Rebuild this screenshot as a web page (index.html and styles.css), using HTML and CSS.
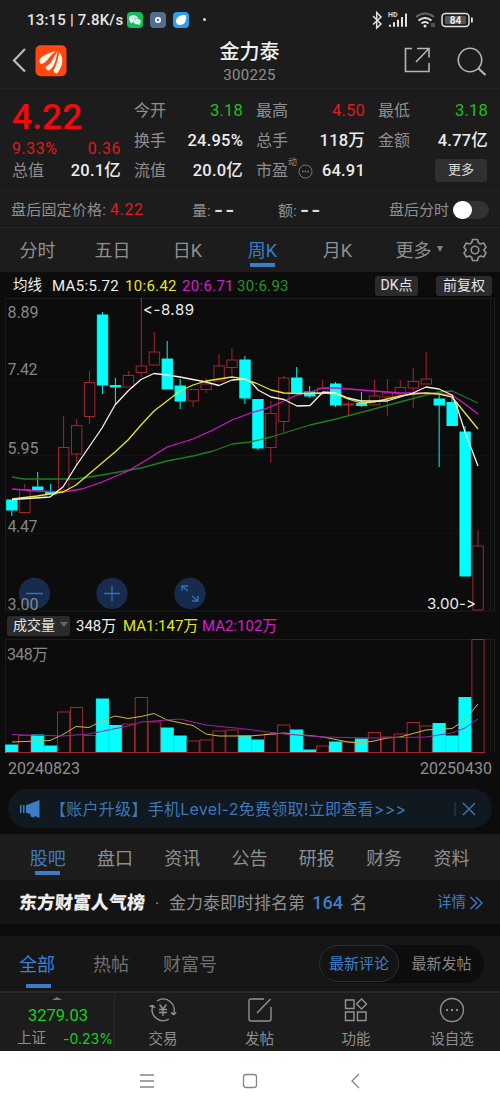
FILE: index.html
```html
<!DOCTYPE html>
<html lang="zh-CN">
<head>
<meta charset="utf-8">
<title>金力泰 300225</title>
<link rel="stylesheet" href="styles.css">
</head>
<body>
<div class="status">
  <span class="clock">13:15 | 7.8K/s</span>
  <svg class="apps" width="64" height="16" viewBox="0 0 64 16">
    <rect width="16" height="16" rx="4" fill="#14bd5c"/>
    <ellipse cx="6.3" cy="6.8" rx="4.4" ry="3.6" fill="#e8f8ee"/><ellipse cx="10.3" cy="9.6" rx="3.7" ry="3" fill="#fff" stroke="#14bd5c" stroke-width=".5"/>
    <path d="M4 9l-.8 2.4L6 10zM11 12l2 1.2-.3-2z" fill="#fff"/>
    <circle cx="5" cy="6" r=".6" fill="#14bd5c"/><circle cx="8" cy="6" r=".6" fill="#14bd5c"/><circle cx="9" cy="9" r=".5" fill="#14bd5c"/><circle cx="11.6" cy="9" r=".5" fill="#14bd5c"/>
    <rect x="23" width="16" height="16" rx="4" fill="#526e8d"/><circle cx="31" cy="8" r="2.2" fill="none" stroke="#fff" stroke-width="1.7"/>
    <rect x="46" width="16" height="16" rx="4" fill="#2ba0e6"/><path d="M49 9.500C49 5 53 2.500 59 3c1 6-1.500 10-6 10q-3.500 0-4-3.500z" fill="#fff"/>
  </svg>
  <span class="dot"></span>
  <svg class="signals" width="104" height="22" viewBox="0 0 104 22">
    <g fill="none" stroke="#e2e2e2" stroke-width="1.500">
      <path d="M1 7l8 8-4.300 4V3.500L9 8l-8 7.500"/>
      <path d="M18 17.800v-2M22 17.800v-4.500M26 17.800v-7M30 17.800V8M34 17.800V4.500" stroke-width="2"/>
      <path d="M44 8q9-7 18 0" stroke="#666" stroke-width="2"/><path d="M46.500 11.500q6.500-5 13 0M49.500 14.500q3.500-3 7 0" stroke-width="2"/>
      <rect x="70" y="4.500" width="27" height="13" rx="3.500"/>
    </g>
    <circle cx="53" cy="17" r="1.500" fill="#e2e2e2"/><path d="M60 14v4M62 14v4" stroke="#888"/>
    <rect x="73" y="7" width="21" height="8" rx="1" fill="#555"/><rect x="99" y="8.500" width="1.800" height="5" fill="#e2e2e2"/>
    <text x="83.500" y="15" class="battery">84</text><text x="16" y="8" class="hd">HD</text>
  </svg>
</div>

<header class="header">
  <svg width="56" height="34" viewBox="0 0 56 34">
    <path d="M14 6L3 17.500l11 11" fill="none" stroke="#b9b9b9" stroke-width="2.200"/>
    <rect x="24.500" y="2.300" width="31" height="31" rx="5" fill="#ff4810"/>
    <g fill="#fff6e8" transform="translate(1 0)">
      <path d="M27.500 18c0-4 7-7.500 16.500-10-7 5-9 12-14.500 13q-2-.5-2-3z"/>
      <path d="M33.500 24c6-3 7-9 12.500-16-2.500 8-2.500 15.500-9 19.500-1.500 0-3-1-3.500-3.500z"/>
      <path d="M41.500 27.500c3-5 4-11 6-18.500 4.500 7 3.500 14-2.500 21.500q-3-.5-3.500-3z"/>
    </g>
  </svg>
  <div class="name"><h1>金力泰</h1><p>300225</p></div>
  <svg class="tools" width="84" height="34" viewBox="0 0 84 34">
    <g fill="none" stroke="#b5b5b5" stroke-width="1.600">
      <path d="M8 5.500H1.500v23h23.500V20M13 5.500h12v9M25 5.500L12 19"/>
      <circle cx="66" cy="17" r="11.700"/><path d="M74.500 25.500l7 6.500" stroke-width="2.200"/>
    </g>
  </svg>
</header>

<section class="quote">
  <div class="col main">
    <strong class="price">4.22</strong>
    <div class="cell red change"><span>9.33%</span><span>0.36</span></div>
    <div class="cell"><span>总值</span><b>20.1亿</b></div>
  </div>
  <div class="col">
    <div class="cell"><span>今开</span><b class="green">3.18</b></div>
    <div class="cell"><span>换手</span><b>24.95%</b></div>
    <div class="cell"><span>流值</span><b>20.0亿</b></div>
  </div>
  <div class="col">
    <div class="cell"><span>最高</span><b class="red">4.50</b></div>
    <div class="cell"><span>总手</span><b>118万</b></div>
    <div class="cell"><span class="pe">市盈<sup>动</sup><svg width="15" height="15" viewBox="0 0 15 15"><circle cx="7.500" cy="7.500" r="6.500" fill="none" stroke="#777"/><path d="M4 7.500h7" stroke="#888" stroke-width="1.300" stroke-dasharray="1.500 1.200"/></svg></span><b>64.91</b></div>
  </div>
  <div class="col">
    <div class="cell"><span>最低</span><b class="green">3.18</b></div>
    <div class="cell"><span>金额</span><b>4.77亿</b></div>
    <div class="cell end"><span class="more">更多</span></div>
  </div>
</section>

<section class="after">
  <span class="fixed">盘后固定价格: <i class="red">4.22</i></span>
  <span class="qty">量: <b>--</b></span>
  <span class="amt">额: <b>--</b></span>
  <span class="session">盘后分时</span><span class="switch"></span>
</section>

<nav class="periods">
  <span>分时</span><span>五日</span><span>日K</span><span class="on">周K</span><span>月K</span><span class="wide">更多<i></i></span>
  <svg width="24" height="24" viewBox="0 0 24 24" fill="none" stroke="#929292" stroke-width="1.600" stroke-linejoin="round"><path d="M9.500 1.500h5l.8 3.200 2.300 1.300 3.100-1 2.300 4.200-2.200 2.800 2.200 2.800-2.300 4.200-3.100-1-2.300 1.300-.8 3.200h-5l-.8-3.200L6.400 18l-3.100 1L1 14.800 3.200 12 1 9.200 3.300 5l3.100 1 2.300-1.300z"/><circle cx="12" cy="12" r="3.800"/></svg>
</nav>

<section class="chart">
  <div class="legend"><span class="ma0">均线</span><span class="ma5">MA5:5.72</span><span class="ma10">10:6.42</span><span class="ma20">20:6.71</span><span class="ma30">30:6.93</span><span class="chip dk">DK点</span><span class="chip fq">前复权</span></div>
  <svg id="candles" class="plot" width="500" height="313" viewBox="0 298 500 313"></svg>
  <div class="legend volume"><span class="chip pick">成交量<i></i></span><span class="v0">348万</span><span class="v1">MA1:147万</span><span class="v2">MA2:102万</span></div>
  <svg id="volume" class="plot" width="500" height="115" viewBox="0 639 500 115"></svg>
  <div class="dates"><span>20240823</span><span>20250430</span></div>
</section>

<section class="banner">
  <svg width="22" height="18" viewBox="0 0 22 18" fill="#3d7cc6"><path d="M0 5h1.500v8H0zM3 5h1.500v8H3zM6 5.200L19.500 0v18L15 16l-1 1.500-3.500-1V14L6 12.800z"/></svg>
  <span>【账户升级】手机Level-2免费领取!立即查看&gt;&gt;&gt;</span>
  <svg class="close" width="28" height="18" viewBox="0 0 28 18" fill="none" stroke="#3d71ad"><path d="M1 2v14" stroke="#28445f"/><path d="M9 3l12 12M21 3L9 15" stroke-width="1.500"/></svg>
</section>

<nav class="sections"><span class="on">股吧</span><span>盘口</span><span>资讯</span><span>公告</span><span>研报</span><span>财务</span><span>资料</span></nav>

<section class="rank">
  <strong>东方财富人气榜</strong><em>·</em><span>金力泰即时排名第 <b>164</b> 名</span>
  <a>详情<svg width="13" height="14" viewBox="0 0 13 14" fill="none" stroke="#3f7dca" stroke-width="1.400"><path d="M.5 1l6 6-6 6M6 1l6 6-6 6"/></svg></a>
</section>

<section class="feed">
  <span class="on">全部</span><span class="hot">热帖</span><span class="cfh">财富号</span>
  <div class="sort"><span class="active">最新评论</span><span>最新发帖</span></div>
</section>

<footer class="bottom">
  <div class="index"><i></i><strong>3279.03</strong><p><span>上证</span><b>-0.23%</b></p></div>
  <div class="action"><svg viewBox="0 0 28 26"><path d="M8 4A11 11 0 0 1 24.500 17M20 22A11 11 0 0 1 3.800 9M.5 9.500L3.800 8.500 6 11M22 15.500l2.500 2 2.800-2M10.500 7.500l3.500 4.500 3.500-4.500M10 12.500h8M10 15.500h8M14 12v7"/></svg>交易</div>
  <div class="action"><svg viewBox="0 0 28 26"><path d="M18 2H5q-2 0-2 2v18q0 2 2 2h18q2 0 2-2V10M24.500 2L11 16"/></svg>发帖</div>
  <div class="action"><svg viewBox="0 0 28 26"><path d="M3.500 3h8.500v8.500H3.500zM3.500 15H12v8.500H3.500zM15.500 15H24v8.500h-8.500zM19.500 2l5 5-5 5-5-5z"/></svg>功能</div>
  <div class="action"><svg viewBox="0 0 28 26"><circle cx="14" cy="13" r="11.500"/><path d="M8 13h2M13 13h2M18 13h2" stroke-width="2"/></svg>设自选</div>
</footer>

<div class="system">
  <svg width="226" height="20" viewBox="0 0 226 20" fill="none" stroke="#858585" stroke-width="1.300"><path d="M3 4h14M3 10h14M3 16h14"/><rect x="106.500" y="3.500" width="13" height="13" rx="2.500"/><path d="M222 3l-7 7 7 7"/></svg>
</div>
<script src="chart.js"></script>
</body>
</html>
```

FILE: styles.css
```css
* { box-sizing: border-box; }
body { margin: 0; width: 500px; height: 1111px; overflow: hidden; background: #0c0c0c; color: #8f8f8f; font: 16px/20px Roboto, "Noto Sans CJK SC", sans-serif; font-variant-ligatures: none; }
h1, p { margin: 0; font-weight: 400; }
i { font-style: normal; }
svg { display: block; flex: none; }
span, b, strong { white-space: nowrap; }
.red { color: #dd1c1f; }
.green { color: #22bd22; }

.status { height: 38px; display: flex; align-items: center; padding: 1px 0 0 27px; background: #1c1c1c; }
.clock { width: 100px; color: #e6e6e6; font-size: 15px; font-weight: 500; letter-spacing: .2px; }
.dot { width: 3px; height: 3px; margin-left: 12px; border-radius: 50%; background: #ddd; }
.signals { margin-left: 166px; }
.battery { font: bold 10px Roboto, sans-serif; fill: #eee; text-anchor: middle; }
.hd { font: bold 7px Roboto, sans-serif; fill: #ddd; }

.header { height: 51px; display: flex; justify-content: space-between; padding: 5px 12px 0 11px; background: #1c1c1c; border-bottom: 1px solid #232323; }
.name { width: 120px; margin-left: 28px; text-align: center; }
.name h1 { color: #f1f1f1; font-size: 20px; line-height: 18px; font-weight: 500; }
.name p { margin-top: 4px; font-size: 15px; line-height: 20px; letter-spacing: .35px; }

.quote { height: 101px; display: grid; grid-template-columns: 109px 109px 109px 110px; column-gap: 13px; padding: 7px 13px 0 12px; background: #1c1c1c; }
.col { display: grid; grid-template-rows: 30px 30px 30px; }
.col.main { grid-template-rows: 46px 14px 30px; }
.price { color: #f4090c; font-size: 35.500px; line-height: 43px; font-weight: 500; }
.cell { display: flex; justify-content: space-between; align-items: center; }
.cell b { font-size: 16.500px; font-weight: 500; letter-spacing: .2px; }
.cell b:not(.red):not(.green) { color: #ececec; }
.cell b.red, .cell b.green { font-weight: 400; font-size: 16.500px; }
.change { height: 14px; letter-spacing: .5px; }
.cell.end { justify-content: flex-end; }
.more { width: 52px; height: 23px; margin: -2px 1px 0 0; background: #303030; color: #ddd; border-radius: 3px; font-size: 13px; line-height: 22px; text-align: center; }
.pe { display: flex; align-items: center; }
.pe sup { align-self: flex-start; font-size: 9px; line-height: 9px; margin-top: -3px; }
.pe svg { margin-left: 1px; }

.after { height: 37px; display: grid; grid-template-columns: 181px 86px 111px 64px 38px; align-items: center; padding: 2px 0 0 11px; font-size: 15px; background: #1c1c1c; border-top: 1px solid #242424; }
.after b { color: #ddd; display: inline-block; font-family: Inter, sans-serif; font-size: 18px; letter-spacing: 2px; transform: scaleX(1.08); transform-origin: left; }
.fixed { font-size: 15px; letter-spacing: .2px; }
.fixed .red { font-size: 16px; letter-spacing: .6px; }
.switch { width: 36px; height: 18px; border-radius: 9px; background: #323232; }
.switch::before { content: ""; display: block; width: 19px; height: 18px; border-radius: 9px; background: #fff; }

.periods { height: 45px; display: grid; grid-template-columns: 75px 75px 75px 75px 75px 88px 24px; align-items: center; background: #1c1c1c; border-top: 1px solid #252525; font-size: 18px; text-align: center; }
.periods > span { line-height: 46px; height: 44px; }
.periods .on, .sections .on, .feed .on { color: #3c7bc8; background: linear-gradient(#3c7bc8, #3c7bc8) center bottom / 25px 4px no-repeat; }
.periods .on { background-position: center 35px; }
.periods .wide i { display: inline-block; margin: 0 0 5px 5px; border: 3px solid transparent; border-top: 6px solid #858585; border-bottom: 0; }

.chart { background: #0c0c0c; }
.legend { height: 26px; display: grid; grid-template-columns: 39px 73px 57px 55px 138px 61px 56px; padding: 2px 0 0 13px; align-items: center; font-size: 15px; }
.ma0, .ma5, .v0 { color: #eee; }
.ma0 { font-size: 14.500px; }
.ma5 { letter-spacing: .35px; }
.ma10, .ma20, .ma30 { letter-spacing: .3px; }
.ma10, .v1 { color: #e5e526; }
.ma20, .v2 { color: #d41fcd; }
.ma30 { color: #24942a; }
.chip { height: 20px; border-radius: 3px; background: #2b2b2b; color: #e5e5e5; font-size: 14px; line-height: 19px; text-align: center; }
.chip.dk { width: 43px; }
.chip.fq { width: 56px; }
.legend.volume { height: 28px; grid-template-columns: 69px 47px 79px 90px; padding: 2px 0 0 7px; }
.chip.pick { width: 63px; text-align: left; padding-left: 6px; }
.chip.pick i { display: inline-block; margin: 0 0 3px 5px; border: 4px solid transparent; border-top: 5px solid #666; border-bottom: 0; }
.plot { font-size: 16px; overflow: visible; }
.grid { stroke: #1d1d1d; fill: none; }
.faint { stroke: #131313; fill: none; }
.up { stroke: #a3262d; fill: none; }
.down { stroke: #00f7f7; fill: #00ffff; }
.line { fill: none; stroke-width: 1.300; stroke-linejoin: round; }
#volume .line { stroke-width: 1; }
.axis { fill: #858585; }
.mark { fill: #eee; font-family: Inter, sans-serif; font-size: 15px; font-feature-settings: "calt" 0; }
.symbol { fill: none; stroke: #3470b5; stroke-width: 1.300; }
.knob { fill: #172b4c; }
.dates { height: 35px; display: flex; justify-content: space-between; padding: 5px 8px 0; }

.banner { height: 39px; margin: 0 8px; padding: 0 12px; border-radius: 20px; background: #101820; color: #3f77b7; display: flex; align-items: center; font: 16px/20px Inter, "Noto Sans CJK SC", sans-serif; font-feature-settings: "calt" 0; }
.banner span { margin-left: 8px; letter-spacing: .28px; }
.banner .close { margin-left: auto; margin-right: -2px; }

.sections { margin-top: 6px; height: 46px; display: grid; grid-template-columns: repeat(7, 67.300px); padding-left: 14px; background: #1c1c1c; font-size: 18px; line-height: 49px; text-align: center; }
.sections span { height: 46px; }
.sections .on { background-position: center 37px; }
.rank { height: 44px; display: flex; align-items: center; padding: 1px 17px 0 19px; background: #141414; font-size: 17px; }
.rank strong { width: 127px; font-size: 18px; font-weight: 900; color: #eee; transform: skewX(-4deg); }
.rank em { width: 22px; text-align: center; margin-right: 1px; }
.rank b { color: #3f7dca; margin: 0 3px; font-size: 18px; font-weight: 500; }
.rank a { display: flex; align-items: center; gap: 4px; margin-left: auto; color: #3f7dca; font-size: 14.500px; }

.feed { margin-top: 12px; height: 55px; display: flex; padding-left: 19px; background: #161616; font-size: 18px; line-height: 58px; color: #6f6f6f; }
.feed > span { height: 55px; }
.feed .on { width: 38px; background-position: center 48px; color: #3b80dd; }
.hot { margin-left: 36px; width: 70px; }
.sort { height: 38px; margin: 9px 0 0 102px; border-radius: 19px; background: #0d0d0d; display: flex; font-size: 15px; line-height: 39px; color: #858585; }
.sort span { width: 85px; height: 37px; text-align: center; }
.sort .active { width: 80px; color: #3f7fca; border: 1px solid #303030; border-radius: 19px; background: #131313; line-height: 37px; }

.bottom { height: 60px; display: grid; grid-template-columns: 115px 96px 97px 96px 96px; border-top: 2px solid #292929; background: #1c1c1c; }
.index { border-right: 1px solid #282828; text-align: center; }
.index i { display: block; width: 10px; height: 3px; margin: 4px auto 0; background: #777; clip-path: polygon(50% 0, 100% 100%, 0 100%); }
.index strong { display: block; padding-left: 2px; color: #19cd25; font-size: 16.500px; line-height: 31px; font-weight: 400; }
.index p { display: flex; justify-content: space-between; padding: 0 1px 0 17px; font-size: 14.500px; line-height: 15px; }
.index b { color: #19cd25; font-family: Inter, sans-serif; font-size: 14px; font-weight: 400; }
.action { display: flex; flex-direction: column; align-items: center; gap: 7px; padding-top: 4px; font-size: 14.500px; line-height: 19px; }
.action svg { width: 28px; height: 26px; fill: none; stroke: #929292; stroke-width: 1.400; }
.system { height: 60px; padding: 20px 0 0 137px; background: #fff; }
```

FILE: chart.js
```js
// Screen-space series: [rising, body top, body bottom, wick top, wick bottom]
const candles = [
  [0,500,510,500,516],[1,489.5,512.5,484,512.5],[0,487,490,472,490],[0,492,494,484,494],
  [1,447.5,490,416,490],[1,425.7,454,419,466],[1,382.5,416.5,371,424],[0,315,385,312,394],
  [0,385.5,387,378,404],[1,375.5,387,371,387],[1,366,372.5,298,377],[1,352,365,332,365],
  [0,359,389,341,389],[0,386,401,379,409],[1,389.5,401,389.5,407],[1,384,389.5,378,393],
  [1,366,381,354,381],[1,360,367.5,348,375],[0,360,398,356,404],[0,399.5,448,399.5,450],
  [1,413.5,447.5,401,463],[1,378,421.5,376,432],[0,378,393,367,393],[0,392,396,386,398],
  [1,388,393,380,396],[0,384,405,382,407],[1,404,405,401,415],[0,403.5,405.5,392,407],
  [1,396,405,380,405],[1,393,397,379,416],[1,387.5,394,380,394],[1,381.5,388,368,408],
  [1,379,384,352,384],[0,399,405,394,467],[0,402.5,425.5,397,425.5],[0,432,576,426,576],[1,546,610,530,610]
];
const volumeTops = [745,735.5,735,746,712,707.5,735.5,699,725.5,724,697.5,722,728,736,741,740,731,730,736,740,734,725,730,750,746,742,742,739,732.5,737,734,722.5,726,723.5,736,697.5,639.5];
const line = (color, pts) => `<polyline class="line" stroke="${color}" points="${pts}"/>`;
const label = (x, y, text, width, cls = 'axis') => `<text x="${x}" y="${y}" class="${cls}" textLength="${width}">${text}</text>`;
const center = i => 11.8 + i * 12.95;

let price = '<path class="faint" d="M6 380.500H494M6 455.500H494M6 533.500H494"/><path class="grid" d="M5.5 298.500V611H494.5V298.500zM490.500 298V611"/>';
price += [34.5, 112, 190].map(x => `<circle class="knob" cx="${x}" cy="593.5" r="15.700"/>`).join('');
price += '<path class="symbol" d="M26 593.500h17M104 593.500h16M112 585.500v16M188 591l-6-5M182 591v-5h6M192 596l6 5M192 601h6v-5"/>';
candles.forEach(([up, top, bottom, high, low], i) => {
  const x = center(i);
  price += `<path class="${up ? 'up' : 'down'}" d="M${x} ${high}V${top}M${x} ${bottom}V${low}"/><rect class="${up ? 'up' : 'down'}" x="${x - 5.1}" y="${top}" width="10.4" height="${bottom - top}"/>`;
});
price += line('#1d7d23', '12,477 24,479 76,479 102,475 141,468 167,461 193,456 213,451 232,444 250,442 271,437 297,429 310,425 336,419 374,409 400,402 426,395 439,392 452,391 465,397 478,403');
price += line('#cd19c8', '12,489 37,491 63,492 82,489 102,482 128,471 148,459 167,447 180,443 193,439 213,430 232,420 252,412.5 265,409 284,401 297,395 310,392 323,388 336,388 374,391 400,393 426,393 439,394 452,395 465,404 478,414');
price += line('#e5e533', '12,499 37,496 63,492 76,485 89,474 102,463 115,452 128,440 141,425 154,411 167,401 180,391 193,385 206,381 219,379 232,377 245,379 258,384 271,390 284,393 297,393.5 323,393 336,394 348,399 361,403 374,402 387,399 400,396 413,394 426,393 439,394 452,397 465,413 478,429');
price += line('#f3f3e8', '12,499.5 50,497 63,487 76,466 89,447 102,428 115,405 128,391 141,379.5 154,373.5 167,375 180,377 206,382 219,385.5 232,380 245,379 252,383 258,390 271,397 284,399.5 297,406 310,405.5 323,392 336,393 348,398 361,401 387,401 400,397 413,393 426,387 439,389 452,395 458,410 465,432 478,466');
price += label(7.5, 317.5, '8.89', 31) + label(7.5, 375, '7.42', 30) + label(7.5, 453.5, '5.95', 31) + label(7.5, 532, '4.47', 30) + label(7.5, 610, '3.00', 31);
price += label(143, 314.5, '&lt;-8.89', 51, 'mark') + label(427, 608.5, '3.00-&gt;', 49, 'mark');
document.getElementById('candles').innerHTML = price;

let volume = '<path class="grid" d="M5.500 752.500V639.500H494.500V752.500M490.500 639V752"/>';
volumeTops.forEach((top, i) => {
  volume += `<rect class="${candles[i][0] ? 'up' : 'down'}" x="${center(i) - 6.1}" y="${top}" width="12.200" height="${752.5 - top}"/>`;
});
volume += '<path class="up" d="M6 752.500H485"/>';
volume += line('#c9b84d', '12,742 50,740.5 63,734.5 76,726.5 89,727.5 102,721 115,716 128,718.5 141,716.5 154,713.5 167,720 193,725.5 206,734 219,736 250,736 284,733 323,737 348,742 361,743 374,741 387,738 400,737 426,730 452,728.5 465,720 478,704');
volume += line('#9a20a5', '12,734.5 63,736 89,734 128,726 141,722 180,719 206,725 245,729 284,734 323,737 374,738 426,737 452,733 465,728 478,719');
volume += label(7, 660, '348万', 41);
document.getElementById('volume').innerHTML = volume;
```
